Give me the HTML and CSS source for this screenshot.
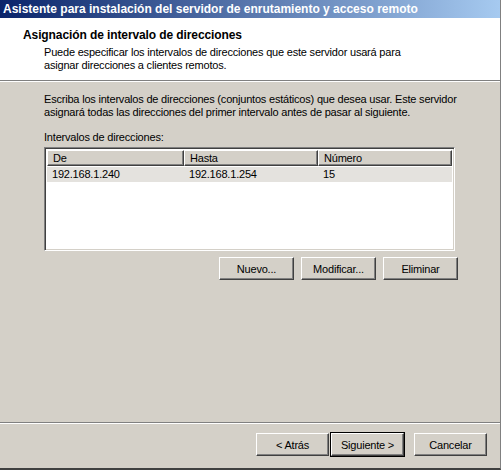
FILE: index.html
```html
<!DOCTYPE html>
<html lang="es">
<head>
  <meta charset="UTF-8">
  <title>Asistente para instalación del servidor de enrutamiento y acceso remoto</title>
  <link rel="stylesheet" href="styles.css">
</head>
<body>
  <div class="ventana">
    <div class="titulo">Asistente para instalación del servidor de enrutamiento y acceso remoto</div>

    <div class="cabecera">
      <h1>Asignación de intervalo de direcciones</h1>
      <p>Puede especificar los intervalos de direcciones que este servidor usará para<br>asignar direcciones a clientes remotos.</p>
    </div>

    <div class="contenido">
      <p class="texto">Escriba los intervalos de direcciones (conjuntos estáticos) que desea usar. Este servidor<br>asignará todas las direcciones del primer intervalo antes de pasar al siguiente.</p>
      <label class="etiqueta">Intervalos de direcciones:</label>
      <div class="lista">
        <div class="fila encabezado">
          <span class="col1">De</span>
          <span class="col2">Hasta</span>
          <span class="col3">Número</span>
        </div>
        <div class="fila seleccionada">
          <span class="col1">192.168.1.240</span>
          <span class="col2">192.168.1.254</span>
          <span class="col3">15</span>
        </div>
      </div>
      <div class="acciones">
        <button class="boton">Nuevo...</button>
        <button class="boton">Modificar...</button>
        <button class="boton">Eliminar</button>
      </div>
    </div>

    <div class="pie">
      <button class="boton">&lt; Atrás</button>
      <button class="boton defecto">Siguiente &gt;</button>
      <button class="boton cancelar">Cancelar</button>
    </div>
  </div>
</body>
</html>
```

FILE: styles.css
```css
body {
  margin: 0;
  background: #d4d0c8;
  font-family: "Liberation Sans", Arial, sans-serif;
  font-size: 11px;
  letter-spacing: -0.2px;
  color: #000;
}
.ventana {
  width: 501px;
  height: 470px;
  display: flex;
  flex-direction: column;
  box-sizing: border-box;
  border-right: 1px solid #808080;
  border-bottom: 2px solid #404040;
  background: #d4d0c8;
}
.titulo {
  height: 18px;
  line-height: 18px;
  padding-left: 3px;
  color: #fff;
  font-weight: bold;
  font-size: 12px;
  letter-spacing: 0;
  background: linear-gradient(to right, #0a246a, #a6caf0);
  white-space: nowrap;
  overflow: hidden;
}
.cabecera {
  background: #fff;
  height: 63px;
  box-sizing: border-box;
  padding: 10px 0 0 23px;
  border-bottom: 1px solid #808080;
  box-shadow: 0 1px 0 #fff;
  white-space: nowrap;
}
.cabecera h1 {
  margin: 0;
  font-size: 12px;
  letter-spacing: -0.1px;
  line-height: 14px;
}
.cabecera p {
  margin: 4px 0 0 21px;
  line-height: 13px;
}
.contenido {
  flex: 1;
  padding: 12px 44px 0 44px;
}
.texto {
  margin: 0;
  line-height: 13px;
  white-space: nowrap;
}
.etiqueta {
  display: block;
  margin-top: 12px;
  line-height: 13px;
}
.lista {
  margin-top: 3px;
  width: 411px;
  height: 104px;
  box-sizing: border-box;
  background: #fff;
  border: 1px solid;
  border-color: #808080 #fff #fff #808080;
  box-shadow: inset 1px 1px #404040, inset -1px -1px #d4d0c8;
  padding: 2px 2px;
}
.fila {
  display: flex;
  height: 15px;
  line-height: 15px;
  white-space: nowrap;
}
.fila span {
  box-sizing: border-box;
  padding-left: 5px;
}
.col1 { width: 137px; }
.col2 { width: 134px; }
.col3 { width: 134px; }
.encabezado {
  height: 16px;
  line-height: 14px;
}
.encabezado span {
  background: #d4d0c8;
  border-top: 1px solid #fff;
  border-left: 1px solid #fff;
  border-right: 1px solid #404040;
  border-bottom: 1px solid #404040;
  box-shadow: inset -1px -1px #808080;
}
.seleccionada {
  background: #e4e2de;
  margin-top: 1px;
  line-height: 14px;
}
.acciones {
  display: flex;
  justify-content: flex-end;
  gap: 7px;
  margin-top: 6px;
  margin-right: -2px;
}
.boton {
  width: 75px;
  height: 23px;
  padding: 0;
  font-family: "Liberation Sans", Arial, sans-serif;
  font-size: 11px;
  letter-spacing: -0.2px;
  color: #000;
  background: #d4d0c8;
  border: 1px solid;
  border-color: #fff #404040 #404040 #fff;
  box-shadow: inset -1px -1px #808080;
}
.pie {
  display: flex;
  height: 46px;
  box-sizing: border-box;
  padding: 10px 13px 0 0;
  justify-content: flex-end;
  border-top: 1px solid #808080;
  box-shadow: inset 0 1px #fff;
}
.pie .boton {
  width: 73px;
}
.defecto {
  outline: 1px solid #000;
  outline-offset: 0;
  margin-left: 2px;
}
.cancelar {
  margin-left: 10px;
}
```
